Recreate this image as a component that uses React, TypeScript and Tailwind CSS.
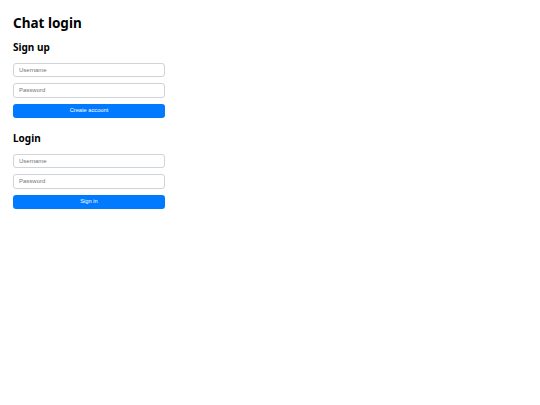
import React from "react";

const arial = { fontFamily: '"Liberation Sans", Arial, sans-serif' };

function Field({ placeholder, type = "text" }: { placeholder: string; type?: string }) {
  return (
    <input
      type={type}
      placeholder={placeholder}
      className="block h-[14.5px] w-[152px] rounded-[3px] border border-[#ced4da] bg-white px-[5px] text-[6px] text-[#333] placeholder:text-[#757575] outline-none"
      style={arial}
    />
  );
}

function Section({ title, button }: { title: string; button: string }) {
  return (
    <div>
      <h2 className="mb-[8.5px] text-[10px] leading-[14px] font-bold text-black">{title}</h2>
      <div className="flex flex-col gap-[6px]">
        <Field placeholder="Username" />
        <Field placeholder="Password" type="password" />
        <button
          className="h-[14px] w-[152px] rounded-[3px] bg-[#007bff] text-[5.7px] text-white"
          style={arial}
        >
          {button}
        </button>
      </div>
    </div>
  );
}

export default function App() {
  return (
    <div
      className="min-h-[405px] bg-white px-[13px] pt-[14px]"
      style={{ fontFamily: '"Noto Sans", "Open Sans", sans-serif' }}
    >
      <h1 className="mb-[8px] text-[13.5px] leading-[18px] font-bold text-black">Chat login</h1>
      <div className="flex flex-col gap-[13.5px]">
        <Section title="Sign up" button="Create account" />
        <Section title="Login" button="Sign in" />
      </div>
    </div>
  );
}
